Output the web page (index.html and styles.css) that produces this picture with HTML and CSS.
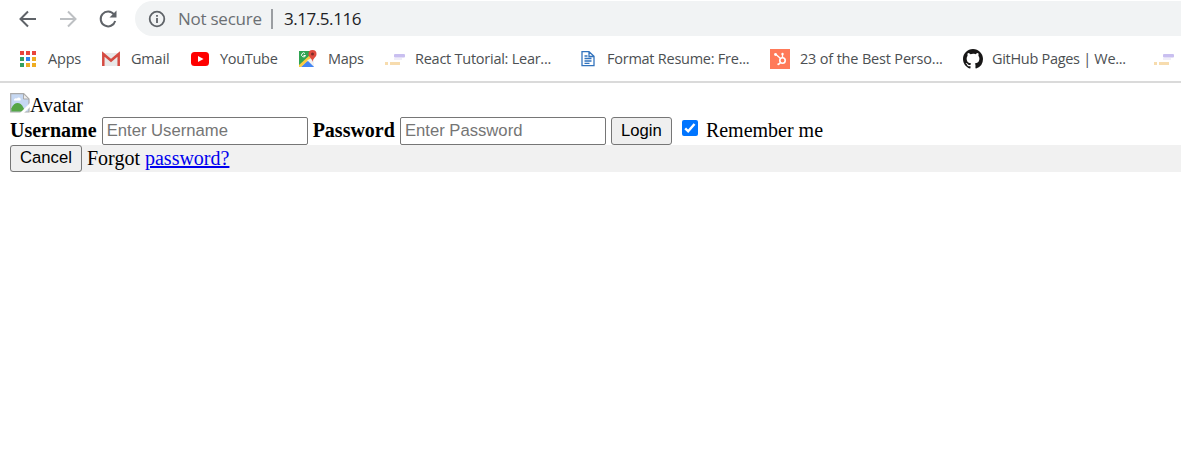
FILE: index.html
```html
<!DOCTYPE html>
<html lang="en">
<head>
<meta charset="utf-8">
<title>Login</title>
<link rel="stylesheet" href="styles.css">
</head>
<body>
<header class="browser">
  <div class="toolbar">
    <svg class="nav" viewBox="0 0 20 20"><path d="M18 10H3M10 2.5 2.5 10l7.500 7.500" fill="none" stroke="#5f6368" stroke-width="2"/></svg>
    <svg class="nav" viewBox="0 0 20 20"><path d="M2 10h15M10 2.500 17.500 10 10 17.500" fill="none" stroke="#bdc0c3" stroke-width="2"/></svg>
    <svg class="nav" viewBox="0 0 20 20"><path d="M16 5.500A7.400 7.400 0 1 0 17.200 12" fill="none" stroke="#5f6368" stroke-width="2"/><path d="M18.500 1.500v7h-7z" fill="#5f6368"/></svg>
    <div class="address">
      <svg class="info" viewBox="0 0 18 18"><circle cx="9" cy="9" r="7.300" fill="none" stroke="#5f6368" stroke-width="1.800"/><path d="M8.100 8h1.800v5H8.100zM8.100 5h1.800v1.800H8.100z" fill="#5f6368"/></svg>
      <span class="security">Not secure</span>
      <span class="divider"></span>
      <span class="url">3.17.5.116</span>
    </div>
  </div>
  <nav class="bookmarks">
    <span class="bookmark apps"><svg class="icon" viewBox="0 0 20 20"><path d="M2 2h4v4H2zM8 2h4v4H8zM14 2h4v4h-4z" fill="#e8453c"/><path d="M2 8h4v4H2zM2 14h4v4H2z" fill="#34a060"/><path d="M8 8h4v4H8z" fill="#2f80ed"/><path d="M14 8h4v4h-4zM8 14h4v4H8zM14 14h4v4h-4z" fill="#efad22"/></svg><span class="label">Apps</span></span>
    <span class="bookmark gmail"><svg class="icon" viewBox="0 0 20 20"><path d="M2 4h16v13H2z" fill="#e8e8e8"/><path d="M2.300 17V5L10 11.500 17.700 5v12" fill="none" stroke="#d54b42" stroke-width="2.500"/></svg><span class="label">Gmail</span></span>
    <span class="bookmark youtube"><svg class="icon" viewBox="0 0 20 20"><rect x="1" y="3" width="18" height="14" rx="3.500" fill="#f00"/><path d="m8 7 5.500 3L8 13z" fill="#fff"/></svg><span class="label">YouTube</span></span>
    <span class="bookmark maps"><svg class="icon" viewBox="0 0 20 20"><path d="M1 2h15v16H1z" fill="#30a452"/><path d="M1 17 16 3v15H1z" fill="#e5e5e5"/><path d="m3 18 6-6 7 6z" fill="#4285f4"/><path d="m1 16 11-10 2 2L3 18H1z" fill="#fbcb43"/><path d="m9 11 7 7V9z" fill="#f2f2f2"/><path d="m4 18 6-6 6 6z" fill="#4285f4"/><path d="M14.500 13c-.3-4-4-4.500-4-8a4 4 0 0 1 8 0c0 3.500-3.700 4-4 8z" fill="#df4b3f"/><circle cx="14.500" cy="5" r="1.500" fill="#812b28"/><path d="M7 4.500a2 2 0 1 0 .5 2H5.500" fill="none" stroke="#fff"/></svg><span class="label">Maps</span></span>
    <span class="bookmark react"><svg class="icon" viewBox="0 0 20 20"><rect x="9" y="5" width="11" height="3.500" rx="1" fill="#c9bff0"/><rect x="9" y="9" width="8" height="2" fill="#f0eef8"/><path d="M0 13h3v3H0zM5 13h10v3H5z" fill="#f7dcae"/></svg><span class="label">React Tutorial: Lear...</span></span>
    <span class="bookmark resume"><svg class="icon" viewBox="0 0 20 20"><path d="M4 2.700h7l5 4.500v9.500H4zM11 3v4.500h5M6.500 7h3M6.500 9.500h7M6.500 12h7M6.500 14.300h5" fill="none" stroke="#3273bd" stroke-width="1.300"/></svg><span class="label">Format Resume: Fre...</span></span>
    <span class="bookmark hubspot"><svg class="icon" viewBox="0 0 20 20"><path d="M0 0h20v20H0z" fill="#ff7a59"/><g fill="none" stroke="#fff"><circle cx="12.500" cy="11.500" r="2.700" stroke-width="1.600"/><path d="M12.500 5v4M5.500 5l5 4.500M10.500 13.500l-2 2" stroke-width="1.300"/></g><g fill="#fff"><circle cx="12.500" cy="5" r="1.200"/><circle cx="5.500" cy="5.500" r="1.400"/><circle cx="8.300" cy="15.300" r="1"/></g></svg><span class="label">23 of the Best Perso...</span></span>
    <span class="bookmark github"><svg class="icon" viewBox="0 0 16 16"><path fill="#181717" d="M8 0C3.580 0 0 3.580 0 8c0 3.540 2.290 6.530 5.470 7.590.4.070.55-.17.55-.38 0-.19-.01-.82-.01-1.490-2.010.37-2.530-.49-2.690-.94-.09-.23-.48-.94-.82-1.130-.28-.15-.68-.52-.01-.53.63-.01 1.080.58 1.230.82.72 1.210 1.870.87 2.330.66.07-.52.28-.87.51-1.070-1.780-.2-3.640-.89-3.640-3.950 0-.87.31-1.590.82-2.150-.08-.2-.36-1.020.08-2.120 0 0 .67-.21 2.200.82A7.600 7.600 0 0 1 8 3.860c.68 0 1.360.09 2 .27 1.530-1.040 2.200-.82 2.200-.82.44 1.100.16 1.920.08 2.120.51.56.82 1.270.82 2.150 0 3.070-1.870 3.750-3.650 3.950.29.25.54.73.54 1.480 0 1.070-.01 1.930-.01 2.200 0 .21.15.46.55.38A8 8 0 0 0 16 8c0-4.420-3.580-8-8-8z"/></svg><span class="label">GitHub Pages | We...</span></span>
    <span class="bookmark last"><svg class="icon" viewBox="0 0 20 20"><rect x="9" y="5" width="11" height="3.500" rx="1" fill="#c9bff0"/><rect x="9" y="9" width="8" height="2" fill="#f0eef8"/><path d="M0 13h3v3H0zM5 13h10v3H5z" fill="#f7dcae"/></svg></span>
  </nav>
</header>
<main class="page">
  <div class="avatar">
    <svg class="broken" viewBox="0 0 20 20"><path d="M.7.700h13l5.300 5.300v13H.7z" fill="#c6d8f3" stroke="#aaa" stroke-width="1.200"/><path d="M1.300 18.400v-3c3-7 9-7 12-1l2 4z" fill="#56a646"/><path d="M4 7.500a2 2 0 0 1 3-2 2 2 0 0 1 3.500 2z" fill="#fff"/><path d="M13.500.8V6H19z" fill="#eee" stroke="#aaa"/><path d="M20 10v4l-6 6h-4z" fill="#fff"/></svg><span>Avatar</span>
  </div>
  <form class="login">
    <b>Username</b>
    <input class="field" type="text" placeholder="Enter Username">
    <b>Password</b>
    <input class="field" type="password" placeholder="Enter Password">
    <button class="button submit" type="button">Login</button>
    <label class="remember"><svg class="check" viewBox="0 0 16 16"><rect width="16" height="16" rx="2" fill="#0075ff"/><path d="m3.200 8.300 3 3 6.300-7.300" fill="none" stroke="#fff" stroke-width="2.400"/></svg><span>Remember me</span></label>
  </form>
  <div class="footer">
    <button class="button cancel" type="button">Cancel</button>
    <span class="forgot">Forgot <a href="#">password?</a></span>
  </div>
</main>
</body>
</html>
```

FILE: styles.css
```css
* { box-sizing: border-box; }
body { margin: 0; background: #fff; overflow: hidden; }
.browser { height: 83px; border-bottom: 2px solid #dadada; font-family: "Open Sans", "Noto Sans", sans-serif; }
.toolbar { display: flex; align-items: center; height: 36px; padding: 1px 0 0 18px; }
.nav { flex: none; width: 20px; height: 20px; margin-right: 20px; }
.nav:nth-child(3) { margin-right: 17px; }
.address { display: flex; align-items: center; flex: 1; height: 35px; padding-left: 13px; border-radius: 18px 0 0 18px; background: #f1f3f4; font-size: 17px; }
.info { width: 18px; height: 18px; margin-right: 12px; }
.security { width: 93px; color: #6b6f73; letter-spacing: -.25px; white-space: nowrap; }
.divider { width: 2px; height: 20px; margin-right: 11px; background: #9a9da1; }
.url { color: #202124; letter-spacing: -.45px; }
.bookmarks { display: flex; align-items: center; height: 45px; padding-left: 18px; overflow: hidden; }
.bookmark { display: flex; flex: none; align-items: center; gap: 10px; width: 192px; font-size: 14.500px; color: #4c4f52; white-space: nowrap; }
.icon { flex: none; width: 20px; height: 20px; }
.apps { width: 83px; letter-spacing: -.2px; }
.gmail { width: 89px; letter-spacing: -.2px; }
.youtube { width: 108px; letter-spacing: -.3px; }
.maps { width: 87px; letter-spacing: -.3px; }
.react { width: 193px; letter-spacing: -.25px; }
.resume { width: 192px; gap: 9px; letter-spacing: -.25px; }
.hubspot { width: 193px; letter-spacing: -.18px; }
.github { width: 191px; gap: 9px; letter-spacing: -.3px; }
.last { width: 20px; }
.page { padding: 10px 0 0 10px; font: 20px/24px "Liberation Serif", serif; color: #000; }
.avatar { display: flex; height: 24px; }
.broken { width: 20px; height: 20px; }
.login { display: flex; align-items: center; gap: 5px; height: 28px; }
.login b { line-height: 26px; padding-bottom: 2px; }
.field { width: 206px; height: 28px; padding: 0 4px 1px; border: 1px solid #767676; border-radius: 2px; font: 16.667px "Liberation Sans", sans-serif; }
.field::placeholder { color: #757575; }
.button { padding: 0; border: 1px solid #767676; border-radius: 3px; background: #efefef; color: #000; font: 16.667px "Liberation Sans", sans-serif; }
.submit { width: 61px; height: 28px; padding-bottom: 1px; }
.remember { display: flex; align-items: center; gap: 8px; margin-left: 5px; padding-bottom: 2px; }
.check { width: 16px; height: 16px; margin-bottom: 5px; }
.footer { display: flex; align-items: center; gap: 5px; height: 27px; background: #f1f1f1; }
.forgot { padding-bottom: 2px; }
.footer a { color: #00e; }
.cancel { width: 72px; height: 27px; padding-bottom: 2px; }
```
